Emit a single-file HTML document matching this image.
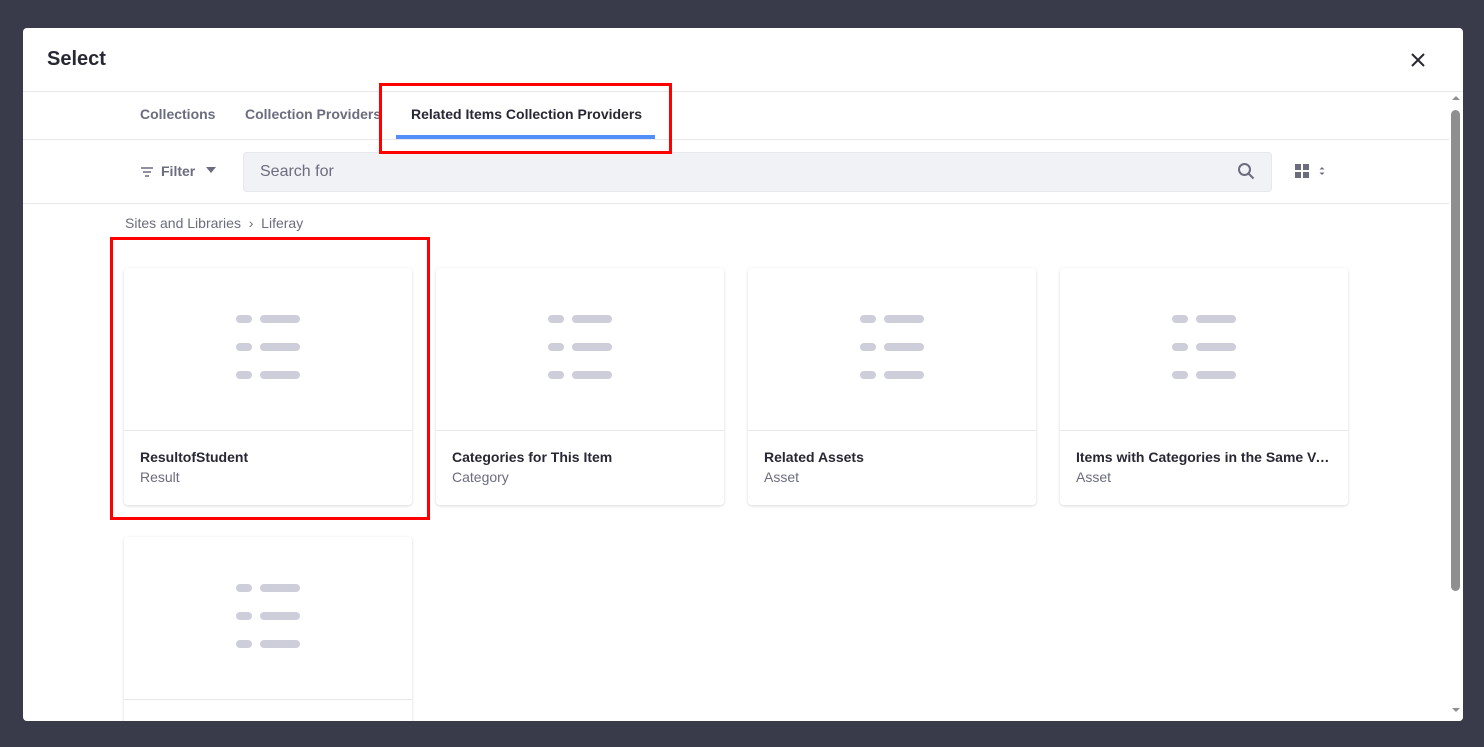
<!DOCTYPE html>
<html><head><style>
*{box-sizing:border-box;margin:0;padding:0}
body{width:1484px;height:747px;background:#393a4a;font-family:"Liberation Sans",sans-serif;position:relative;overflow:hidden}
.modal{position:absolute;left:23px;top:28px;width:1440px;height:693px;background:#fff;border-radius:4px;overflow:hidden}
.abs{position:absolute}
.title{left:24px;top:20px;font-size:20px;font-weight:bold;color:#272833}
.hr{left:0;height:1px;background:#e7e7ed}
.tab{top:78px;font-size:14px;font-weight:bold;color:#6b6c7e}
.card{position:absolute;width:288px;height:237px;border-radius:4px;box-shadow:0 1px 3px rgba(0,0,0,.15);background:#fff}
.card .foot{position:absolute;top:162px;left:0;right:0;border-top:1px solid #e7e7ed;padding:18px 16px}
.card .n{font-size:14px;font-weight:bold;color:#272833;white-space:nowrap;overflow:hidden;text-overflow:ellipsis}
.card .s{font-size:14px;color:#6b6c7e;margin-top:4px}
.ic{position:absolute;left:112px;top:47px}
.ic i{position:absolute;height:8px;border-radius:4px;background:#cdced9}
.red{position:absolute;border:3px solid #f00}
</style></head><body>
<div class="modal">
<div class="abs title">Select</div>
<svg class="abs" style="left:1387px;top:24px" width="16" height="16"><path d="M2 2L14 14M14 2L2 14" stroke="#272833" stroke-width="2"/></svg>
<div class="abs hr" style="top:63px;width:1440px"></div>
<div class="abs tab" style="left:117px">Collections</div>
<div class="abs tab" style="left:222px">Collection Providers</div>
<div class="abs tab" style="left:388px;color:#272833">Related Items Collection Providers</div>
<div class="abs" style="left:373px;top:107px;width:259px;height:4px;background:#528ef8"></div>
<div class="abs hr" style="top:111px;width:1426px"></div>
<svg class="abs" style="left:117px;top:138px" width="14" height="12"><path d="M1 2h12M3 6h8M5 10h4" stroke="#6b6c7e" stroke-width="1.6"/></svg>
<div class="abs" style="left:138px;top:135px;font-size:14px;font-weight:bold;color:#6b6c7e">Filter</div>
<svg class="abs" style="left:183px;top:139px" width="10" height="6"><path d="M0 0h10L5 6z" fill="#6b6c7e"/></svg>
<div class="abs" style="left:220px;top:124px;width:1029px;height:40px;background:#f1f2f5;border:1px solid #e7e7ed;border-radius:4px"></div>
<div class="abs" style="left:237px;top:135px;font-size:16px;color:#6b6c7e">Search for</div>
<svg class="abs" style="left:1214px;top:134px" width="18" height="18"><circle cx="7.5" cy="7.5" r="5.5" fill="none" stroke="#6b6c7e" stroke-width="2"/><path d="M11.5 11.5l5 5" stroke="#6b6c7e" stroke-width="2"/></svg>
<svg class="abs" style="left:1272px;top:136px" width="30" height="16"><rect x="0" y="0" width="6" height="6" fill="#6b6c7e"/><rect x="8" y="0" width="6" height="6" fill="#6b6c7e"/><rect x="0" y="8" width="6" height="6" fill="#6b6c7e"/><rect x="8" y="8" width="6" height="6" fill="#6b6c7e"/><path d="M27 3l2.5 2.5h-5zM27 11l2.5-2.5h-5z" fill="#6b6c7e"/></svg>
<div class="abs hr" style="top:175px;width:1426px"></div>
<div class="abs" style="left:102px;top:187px;font-size:14px;color:#6b6c7e">Sites and Libraries &nbsp;›&nbsp; Liferay</div>
<div class="abs" style="left:1427px;top:64px;width:13px;height:629px;background:#fff"></div>
<div class="abs" style="left:1428px;top:82px;width:9px;height:481px;background:#8f8f8f;border-radius:5px"></div>
<svg class="abs" style="left:1427px;top:66px" width="12" height="8"><path d="M2 6h8L6 2z" fill="#8f8f8f"/></svg>
<svg class="abs" style="left:1427px;top:678px" width="12" height="8"><path d="M2 2h8L6 6z" fill="#8f8f8f"/></svg>
</div>
<div class="card" style="left:124px;top:268px"><div class="ic"><i style="left:0;top:0;width:16px"></i><i style="left:24px;top:0;width:40px"></i><i style="left:0;top:28px;width:16px"></i><i style="left:24px;top:28px;width:40px"></i><i style="left:0;top:56px;width:16px"></i><i style="left:24px;top:56px;width:40px"></i></div><div class="foot"><div class="n">ResultofStudent</div><div class="s">Result</div></div></div>
<div class="card" style="left:436px;top:268px"><div class="ic"><i style="left:0;top:0;width:16px"></i><i style="left:24px;top:0;width:40px"></i><i style="left:0;top:28px;width:16px"></i><i style="left:24px;top:28px;width:40px"></i><i style="left:0;top:56px;width:16px"></i><i style="left:24px;top:56px;width:40px"></i></div><div class="foot"><div class="n">Categories for This Item</div><div class="s">Category</div></div></div>
<div class="card" style="left:748px;top:268px"><div class="ic"><i style="left:0;top:0;width:16px"></i><i style="left:24px;top:0;width:40px"></i><i style="left:0;top:28px;width:16px"></i><i style="left:24px;top:28px;width:40px"></i><i style="left:0;top:56px;width:16px"></i><i style="left:24px;top:56px;width:40px"></i></div><div class="foot"><div class="n">Related Assets</div><div class="s">Asset</div></div></div>
<div class="card" style="left:1060px;top:268px"><div class="ic"><i style="left:0;top:0;width:16px"></i><i style="left:24px;top:0;width:40px"></i><i style="left:0;top:28px;width:16px"></i><i style="left:24px;top:28px;width:40px"></i><i style="left:0;top:56px;width:16px"></i><i style="left:24px;top:56px;width:40px"></i></div><div class="foot"><div class="n">Items with Categories in the Same Vocabulary</div><div class="s">Asset</div></div></div>
<div style="position:absolute;left:0;top:0;width:1484px;height:721px;overflow:hidden">
<div class="card" style="left:124px;top:537px"><div class="ic"><i style="left:0;top:0;width:16px"></i><i style="left:24px;top:0;width:40px"></i><i style="left:0;top:28px;width:16px"></i><i style="left:24px;top:28px;width:40px"></i><i style="left:0;top:56px;width:16px"></i><i style="left:24px;top:56px;width:40px"></i></div><div class="foot"><div class="n">Items with Same Categories</div><div class="s">Asset</div></div></div>
</div>
<div class="red" style="left:379px;top:83px;width:293px;height:71px"></div>
<div class="red" style="left:110px;top:237px;width:320px;height:283px"></div>
</body></html>
